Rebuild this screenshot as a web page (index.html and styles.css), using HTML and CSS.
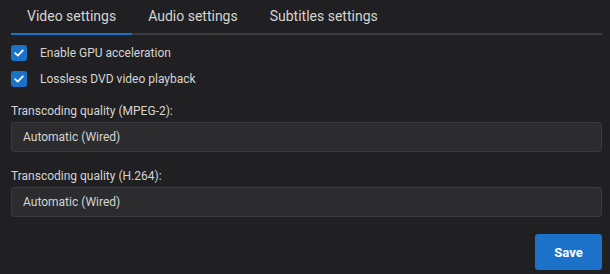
FILE: index.html
```html
<!DOCTYPE html>
<html lang="en">
<head>
    <meta charset="UTF-8">
    <title>Settings</title>
    <link rel="stylesheet" href="styles.css">
</head>
<body>
    <div class="settings">
        <div class="tabs">
            <div class="tab active">Video settings</div>
            <div class="tab">Audio settings</div>
            <div class="tab">Subtitles settings</div>
        </div>

        <label class="check-row">
            <span class="checkbox">
                <svg width="10" height="8" viewBox="0 0 10 8"><path d="M1.2 4.2 L3.8 6.6 L8.8 1.4" fill="none" stroke="#fff" stroke-width="1.8" stroke-linecap="round" stroke-linejoin="round"/></svg>
            </span>
            <span>Enable GPU acceleration</span>
        </label>
        <label class="check-row">
            <span class="checkbox">
                <svg width="10" height="8" viewBox="0 0 10 8"><path d="M1.2 4.2 L3.8 6.6 L8.8 1.4" fill="none" stroke="#fff" stroke-width="1.8" stroke-linecap="round" stroke-linejoin="round"/></svg>
            </span>
            <span>Lossless DVD video playback</span>
        </label>

        <div class="field first">
            <div class="field-label">Transcoding quality (MPEG-2):</div>
            <div class="select">Automatic (Wired)</div>
        </div>
        <div class="field">
            <div class="field-label">Transcoding quality (H.264):</div>
            <div class="select">Automatic (Wired)</div>
        </div>

        <div class="actions">
            <button class="save-button">Save</button>
        </div>
    </div>
</body>
</html>
```

FILE: styles.css
```css
html, body { background: #202022; }
body {
    margin: 0;
    font-family: Roboto, "Open Sans", sans-serif;
    color: #d4d4d4;
    font-size: 12px;
}

.settings {
    padding: 0 8px 0 11px;
}

/* Tab strip */
.tabs {
    display: flex;
    height: 33px;
    border-bottom: 2px solid #3c3c3e;
}

.tab {
    padding: 0 16px;
    font-size: 14px;
    line-height: 33px;
    color: #d4d4d4;
    margin-bottom: -2px;
    border-bottom: 2px solid transparent;
}

.tab.active {
    border-bottom-color: #1b72c8;
}

/* Checkboxes */
.check-row {
    display: flex;
    align-items: center;
    height: 26px;
    gap: 13px;
}

.check-row:first-of-type {
    margin-top: 5px;
}

.checkbox {
    width: 16px;
    height: 16px;
    border-radius: 3px;
    background: #1b72c8;
    display: flex;
    align-items: center;
    justify-content: center;
}

/* Selects */
.field.first { margin-top: 11px; }
.field { margin-bottom: 16px; }

.field-label {
    line-height: 17px;
    margin-bottom: 2px;
}

.select {
    height: 28px;
    line-height: 28px;
    border: 1px solid #3a3a3c;
    border-radius: 3px;
    background: #2c2c2e;
    padding: 0 11px;
}

.actions {
    display: flex;
    justify-content: flex-end;
    margin-top: 17px;
}

.save-button {
    width: 67px;
    height: 36px;
    border: none;
    border-radius: 3px;
    background: #1b72c8;
    color: #fff;
    font-family: inherit;
    font-size: 13px;
    font-weight: 700;
}
```
